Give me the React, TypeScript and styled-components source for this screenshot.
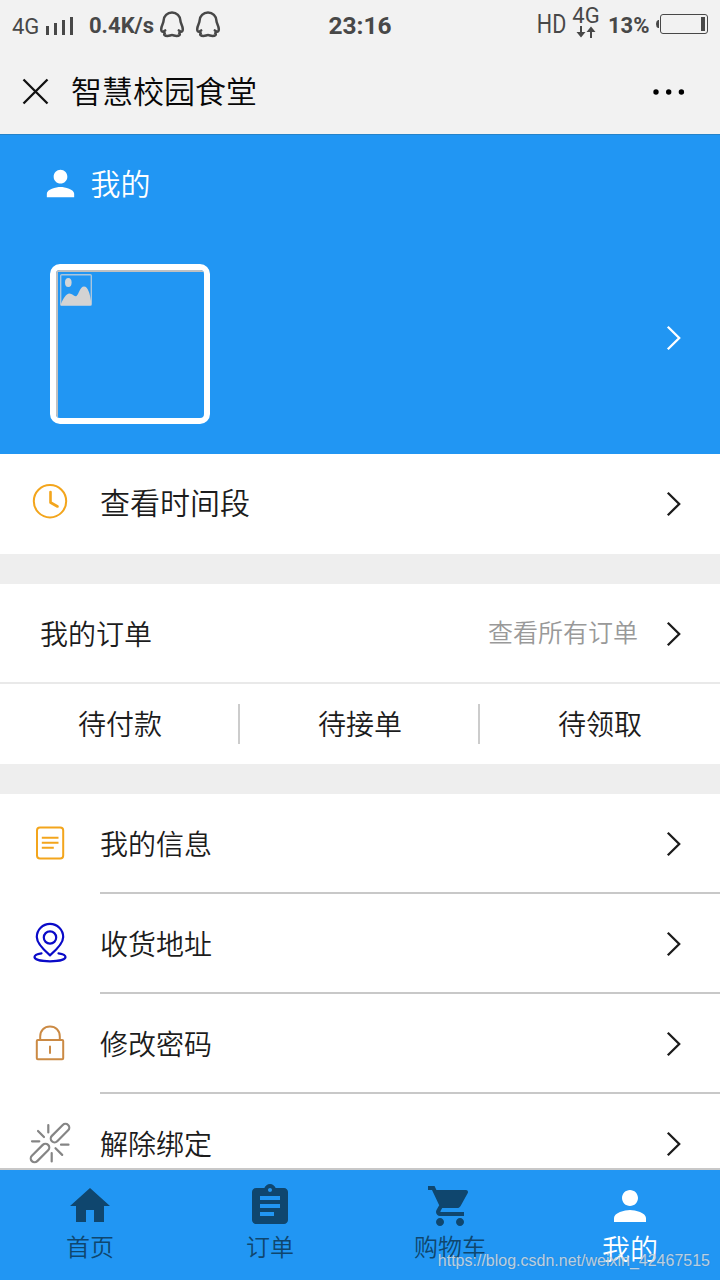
import React from "react";
import styled, { createGlobalStyle } from "styled-components";

const Global = createGlobalStyle`
  * { box-sizing: border-box; }
  body { margin: 0; overflow: hidden; }
`;

const Screen = styled.div`
  position: relative;
  width: 720px;
  height: 1280px;
  display: flex;
  flex-direction: column;
  overflow: hidden;
  background: #fff;
  color: #1c1c1c;
  font-family: "Noto Sans CJK SC", sans-serif;
  font-weight: 350;
  svg { display: block; flex: none; }
`;

const StatusBar = styled.header`
  height: 50px;
  flex: none;
  display: grid;
  grid-template-columns: 1fr auto 1fr;
  align-items: center;
  background: #f2f2f2;
  color: #484848;
  font-family: Roboto, sans-serif;
`;

const StatusGroup = styled.div<{ $end?: boolean }>`
  display: flex;
  align-items: center;
  height: 50px;
  justify-content: ${(p) => (p.$end ? "flex-end" : "flex-start")};
  padding: ${(p) => (p.$end ? "0 11px 0 0" : "0 0 0 12px")};
`;

const StatusText = styled.span<{ $size: number; $bold?: boolean; $width?: number; $drop?: number }>`
  font-size: ${(p) => p.$size}px;
  font-weight: ${(p) => (p.$bold ? 700 : 400)};
  line-height: 30px;
  white-space: nowrap;
  width: ${(p) => (p.$width ? `${p.$width}px` : "auto")};
  padding-top: ${(p) => p.$drop ?? 0}px;
`;

const HdMark = styled(StatusText)`
  transform: scaleX(0.86);
  transform-origin: right center;
`;

const Signal = styled.svg`
  margin: 2px 14px 0 0;
`;

const PenguinIcon = styled.svg`
  margin-right: 10px;
`;

const NetStack = styled.div`
  display: flex;
  flex-direction: column;
  align-items: center;
  width: 28px;
  margin: -5px 8px 0 6px;
  span { line-height: 20px; }
`;

const TitleBar = styled.div`
  height: 84px;
  flex: none;
  display: flex;
  align-items: center;
  padding: 0 35px 2px 22px;
  background: #f2f2f2;
`;

const Dots = styled.svg`
  margin-top: 2px;
`;

const Title = styled.h1`
  flex: 1;
  margin: 0 0 0 22px;
  font-size: 31px;
  line-height: 42px;
  padding-bottom: 2px;
  font-weight: 350;
  color: #080808;
`;

const Profile = styled.section`
  height: 320px;
  flex: none;
  background: #2196f3;
  border-top: 1px solid #2583c9;
  color: #fff;
`;

const ProfileTitle = styled.div`
  height: 97px;
  display: flex;
  align-items: center;
  gap: 10px;
  padding-left: 39.500px;
  font-size: 30px;
  line-height: 44px;
`;

const ProfileRow = styled.div`
  display: flex;
  justify-content: space-between;
  padding: 32px 38px 0 50px;
  > svg { margin-top: 61px; }
`;

const Avatar = styled.div`
  width: 160px;
  height: 160px;
  border: 6px solid #fff;
  border-radius: 10px;
  overflow: hidden;
`;

const AvatarImage = styled.div`
  width: 148px;
  height: 148px;
  padding: 2px;
  border-top: 2px solid #bfc0c1;
  border-left: 2px solid #bfc0c1;
`;

const Gap = styled.div`
  height: 30px;
  flex: none;
  background: #eee;
`;

const MenuRow = styled.div<{ $size?: number }>`
  height: 100px;
  flex: none;
  display: flex;
  align-items: stretch;
  font-size: ${(p) => p.$size ?? 28}px;
`;

const IconCell = styled.div`
  width: 100px;
  flex: none;
  padding: 19px 0 0 20px;
`;

const MenuBody = styled.div<{ $line?: boolean }>`
  flex: 1;
  display: flex;
  align-items: center;
  justify-content: space-between;
  padding: ${(p) => (p.$line ? "2px" : "0")} 38px 0 0;
  border-bottom: ${(p) => (p.$line ? "2px solid #c8c8c8" : "none")};
`;

const Label = styled.span<{ $lift?: number }>`
  line-height: 44px;
  padding-bottom: ${(p) => p.$lift ?? 2}px;
`;

const OrderHead = styled.div`
  height: 100px;
  flex: none;
  display: flex;
  align-items: center;
  padding: 2px 38px 0 40px;
  border-bottom: 2px solid #e9e9e9;
  font-size: 28px;
`;

const AllOrders = styled.span`
  margin: 0 28px 0 auto;
  font-size: 25px;
  line-height: 44px;
  color: #999;
  padding-bottom: 6px;
`;

const OrderTabs = styled.div`
  height: 80px;
  flex: none;
  display: grid;
  grid-template-columns: repeat(3, 1fr);
  align-items: center;
`;

const OrderTab = styled.div`
  height: 40px;
  line-height: 38px;
  text-align: center;
  font-size: 28px;
  padding-left: 2px;
  border-right: 2px solid #ccc;
  &:last-child { border-right: 2px solid transparent; }
`;

const NavBar = styled.nav`
  position: absolute;
  left: 0;
  right: 0;
  bottom: 0;
  height: 112px;
  display: grid;
  grid-template-columns: repeat(4, 1fr);
  background: #2196f3;
  border-top: 2px solid #c8c8c8;
`;

const NavItem = styled.div<{ $active?: boolean }>`
  display: flex;
  flex-direction: column;
  align-items: center;
  padding-top: 12px;
  color: ${(p) => (p.$active ? "#fff" : "#0f466e")};
  font-size: ${(p) => (p.$active ? 28 : 24)}px;
  span { line-height: ${(p) => (p.$active ? 36 : 32)}px; }
`;

const Watermark = styled.div`
  position: absolute;
  right: 10px;
  bottom: 9px;
  font: 400 16px/20px "Liberation Sans", sans-serif;
  color: rgba(225, 232, 240, 0.8);
  text-shadow: 0 0 1px rgba(60, 80, 100, 0.5);
`;

const paths = {
  person:
    "M12 12c2.21 0 4-1.79 4-4s-1.79-4-4-4-4 1.79-4 4 1.79 4 4 4zm0 2c-2.67 0-8 1.34-8 4v2h16v-2c0-2.66-5.33-4-8-4z",
  home: "M10 20v-6h4v6h5v-8h3L12 3 2 12h3v8z",
  orders:
    "M19 3h-4.18C14.4 1.84 13.3 1 12 1c-1.3 0-2.4.84-2.82 2H5c-1.1 0-2 .9-2 2v14c0 1.1.9 2 2 2h14c1.1 0 2-.9 2-2V5c0-1.1-.9-2-2-2zm-7 0c.55 0 1 .45 1 1s-.45 1-1 1-1-.45-1-1 .45-1 1-1zm2 14H7v-2h7v2zm3-4H7v-2h10v2zm0-4H7V7h10v2z",
  cart:
    "M7 18c-1.1 0-1.99.9-1.99 2S5.9 22 7 22s2-.9 2-2-.9-2-2-2zM1 2v2h2l3.6 7.59-1.35 2.45c-.16.28-.25.61-.25.96 0 1.1.9 2 2 2h12v-2H7.42c-.14 0-.25-.11-.25-.25l.03-.12.9-1.63h7.45c.75 0 1.41-.41 1.75-1.03l3.58-6.49c.08-.14.12-.31.12-.48 0-.55-.45-1-1-1H5.21l-.94-2H1zm16 16c-1.1 0-1.99.9-1.99 2s.89 2 1.99 2 2-.9 2-2-.9-2-2-2z",
};

const Glyph = ({ d, size = 48 }: { d: string; size?: number }) => (
  <svg width={size} height={size} viewBox="0 0 24 24" fill="currentColor">
    <path d={d} />
  </svg>
);

const Chevron = () => (
  <svg width="16" height="26" viewBox="0 0 16 26" fill="none" stroke="currentColor" strokeWidth="2.3">
    <path d="M1.8 1.8 13.2 13 1.8 24.2" />
  </svg>
);

const Penguin = () => (
  <PenguinIcon width="26" height="28" viewBox="0 0 26 28" fill="none" stroke="currentColor" strokeWidth="2.5" strokeLinejoin="round" strokeLinecap="round">
    <path d="M13 1.500C8.400 1.500 4.600 4.900 4.600 9.600C4.600 12.300 2.200 14.500 2.200 18.300C2.200 20.200 3.200 21 4.500 20.600L6.200 19.400M4.500 20.600C4.600 21.300 5.200 21.800 5.800 22.200C4.300 23.600 5.600 24.900 8.500 24.900C10.500 24.900 11.500 24.100 13 24.100C14.500 24.100 15.500 24.900 17.500 24.900C20.400 24.900 21.700 23.600 20.200 22.200C20.800 21.800 21.400 21.300 21.500 20.600L19.800 19.400M21.500 20.600C22.800 21 23.800 20.200 23.800 18.300C23.800 14.500 21.400 12.300 21.400 9.600C21.400 4.900 17.600 1.500 13 1.500" />
  </PenguinIcon>
);

const LineIcon = ({ color, width = 2, children }: { color: string; width?: number; children: React.ReactNode }) => (
  <svg width="60" height="60" viewBox="0 0 60 60" fill="none" stroke={color} strokeWidth={width} strokeLinecap="round" strokeLinejoin="round">
    {children}
  </svg>
);

const ClockIcon = () => (
  <LineIcon color="#f3a51c">
    <circle cx="30" cy="28.200" r="16.200" />
    <path d="M30.500 19V29.500L37.500 33.500" strokeWidth="2.600" />
  </LineIcon>
);

const NoteIcon = () => (
  <LineIcon color="#f3a51c">
    <rect x="17" y="14.600" width="26.200" height="31" rx="3" />
    <path d="M21.800 24.800H38.500M21.800 29.800H38.500M21.800 34.800H33.800" strokeLinecap="butt" />
  </LineIcon>
);

const PinIcon = () => (
  <LineIcon color="#0a0ac8" width={2.2}>
    <circle cx="30" cy="24.500" r="6.200" />
    <path d="M30 42.300C27.200 39.900 16.800 31.200 16.800 24A13.200 13.200 0 0 1 43.200 24C43.200 31.200 32.800 39.900 30 42.300Z" />
    <path d="M21.500 40.300C17 41 14.500 42.400 14.500 44C14.500 46.700 21 48.300 30 48.300C39 48.300 45.500 46.700 45.500 44C45.500 42.400 43 41 38.500 40.300" />
  </LineIcon>
);

const LockIcon = () => (
  <LineIcon color="#cb8a44">
    <rect x="16.800" y="27" width="26.400" height="19.300" rx="1" />
    <path d="M20.200 26.500V23.500C20.200 17.500 24.300 13.600 30 13.600C35.700 13.600 39.800 17.500 39.800 23.500V26.500M30 33.500V40" />
  </LineIcon>
);

const UnlinkIcon = () => (
  <LineIcon color="#858585" width={2.2}>
    <rect x="28.500" y="16.300" width="23" height="7.600" rx="3.800" transform="rotate(-45 40 20.100)" />
    <rect x="8.500" y="36.200" width="23" height="7.600" rx="3.800" transform="rotate(-45 20 40)" />
    <path d="M28.300 12V19.500M18 18 24 24M12 28.300H19.300M41 31.700H48.500M35.500 35.200 42.200 41.900M31.700 40V48.500" />
  </LineIcon>
);

const rows = [
  { text: "我的信息", icon: <NoteIcon /> },
  { text: "收货地址", icon: <PinIcon /> },
  { text: "修改密码", icon: <LockIcon /> },
  { text: "解除绑定", icon: <UnlinkIcon /> },
];

const tabs = [
  { text: "首页", d: paths.home },
  { text: "订单", d: paths.orders },
  { text: "购物车", d: paths.cart },
  { text: "我的", d: paths.person, active: true },
];

export default function App() {
  return (
    <Screen>
      <Global />
      <StatusBar>
        <StatusGroup>
          <StatusText $size={22} $width={33} $drop={4}>4G</StatusText>
          <Signal width="30" height="20" viewBox="0 0 30 20" fill="currentColor">
            <path d="M1 10h3v9H1zM9 7h3v12H9zM17 4h3v15h-3zM25 1h3v18h-3z" />
          </Signal>
          <StatusText $size={22} $bold $width={70} $drop={1}>0.4K/s</StatusText>
          <Penguin />
          <Penguin />
        </StatusGroup>
        <StatusText $size={24.5} $bold $drop={1}>23:16</StatusText>
        <StatusGroup $end>
          <HdMark $size={25}>HD</HdMark>
          <NetStack>
            <StatusText $size={22}>4G</StatusText>
            <svg width="20" height="13" viewBox="0 0 20 13" fill="currentColor">
              <path d="M4 0h2v6h3.500l-4.500 5.500L.5 6H4zM14 12h2V6h3.500L15 .5 10.500 6H14z" />
            </svg>
          </NetStack>
          <StatusText $size={22} $bold $width={48} $drop={1}>13%</StatusText>
          <svg width="53" height="22" viewBox="0 0 53 22">
            <path d="M3 6H2Q0 7 0 10T2 14H3Z" fill="currentColor" />
            <rect x="4.500" y="0.500" width="47" height="19" rx="2.500" fill="none" stroke="currentColor" />
            <rect x="45" y="3" width="4" height="14" fill="currentColor" />
          </svg>
        </StatusGroup>
      </StatusBar>
      <TitleBar>
        <svg width="27" height="27" viewBox="0 0 27 27" stroke="#111" strokeWidth="2.300">
          <path d="M1.500 1.500 25.500 25.500M25.500 1.500 1.500 25.500" />
        </svg>
        <Title>智慧校园食堂</Title>
        <Dots width="32" height="6" viewBox="0 0 32 6" fill="#000">
          <circle cx="3" cy="3" r="2.700" />
          <circle cx="15.700" cy="3" r="2.700" />
          <circle cx="28.400" cy="3" r="2.700" />
        </Dots>
      </TitleBar>
      <Profile>
        <ProfileTitle>
          <Glyph d={paths.person} size={41} />
          <Label $lift={4}>我的</Label>
        </ProfileTitle>
        <ProfileRow>
          <Avatar>
            <AvatarImage>
              <svg width="32" height="32" viewBox="0 0 32 32">
                <rect x="0.700" y="0.700" width="30.600" height="30.600" rx="1" fill="none" stroke="#a9c6de" strokeWidth="1.400" />
                <ellipse cx="8.300" cy="8.500" rx="3.300" ry="4.500" fill="#d3d6d8" />
                <path d="M1 30C3 25 6 19.500 9.500 19.500C12.500 19.500 14 23 16.500 22C19 20 20 12.500 24 12.500C28 12.500 30 20 31 27V31H1Z" fill="#d3d3d3" />
              </svg>
            </AvatarImage>
          </Avatar>
          <Chevron />
        </ProfileRow>
      </Profile>
      <MenuRow $size={30}>
        <IconCell><ClockIcon /></IconCell>
        <MenuBody>
          <Label $lift={6}>查看时间段</Label>
          <Chevron />
        </MenuBody>
      </MenuRow>
      <Gap />
      <OrderHead>
        <Label>我的订单</Label>
        <AllOrders>查看所有订单</AllOrders>
        <Chevron />
      </OrderHead>
      <OrderTabs>
        <OrderTab>待付款</OrderTab>
        <OrderTab>待接单</OrderTab>
        <OrderTab>待领取</OrderTab>
      </OrderTabs>
      <Gap />
      {rows.map((r) => (
        <MenuRow key={r.text}>
          <IconCell>{r.icon}</IconCell>
          <MenuBody $line>
            <Label>{r.text}</Label>
            <Chevron />
          </MenuBody>
        </MenuRow>
      ))}
      <NavBar>
        {tabs.map((t) => (
          <NavItem key={t.text} $active={t.active}>
            <Glyph d={t.d} />
            <span>{t.text}</span>
          </NavItem>
        ))}
      </NavBar>
      <Watermark>https://blog.csdn.net/weixin_42467515</Watermark>
    </Screen>
  );
}
